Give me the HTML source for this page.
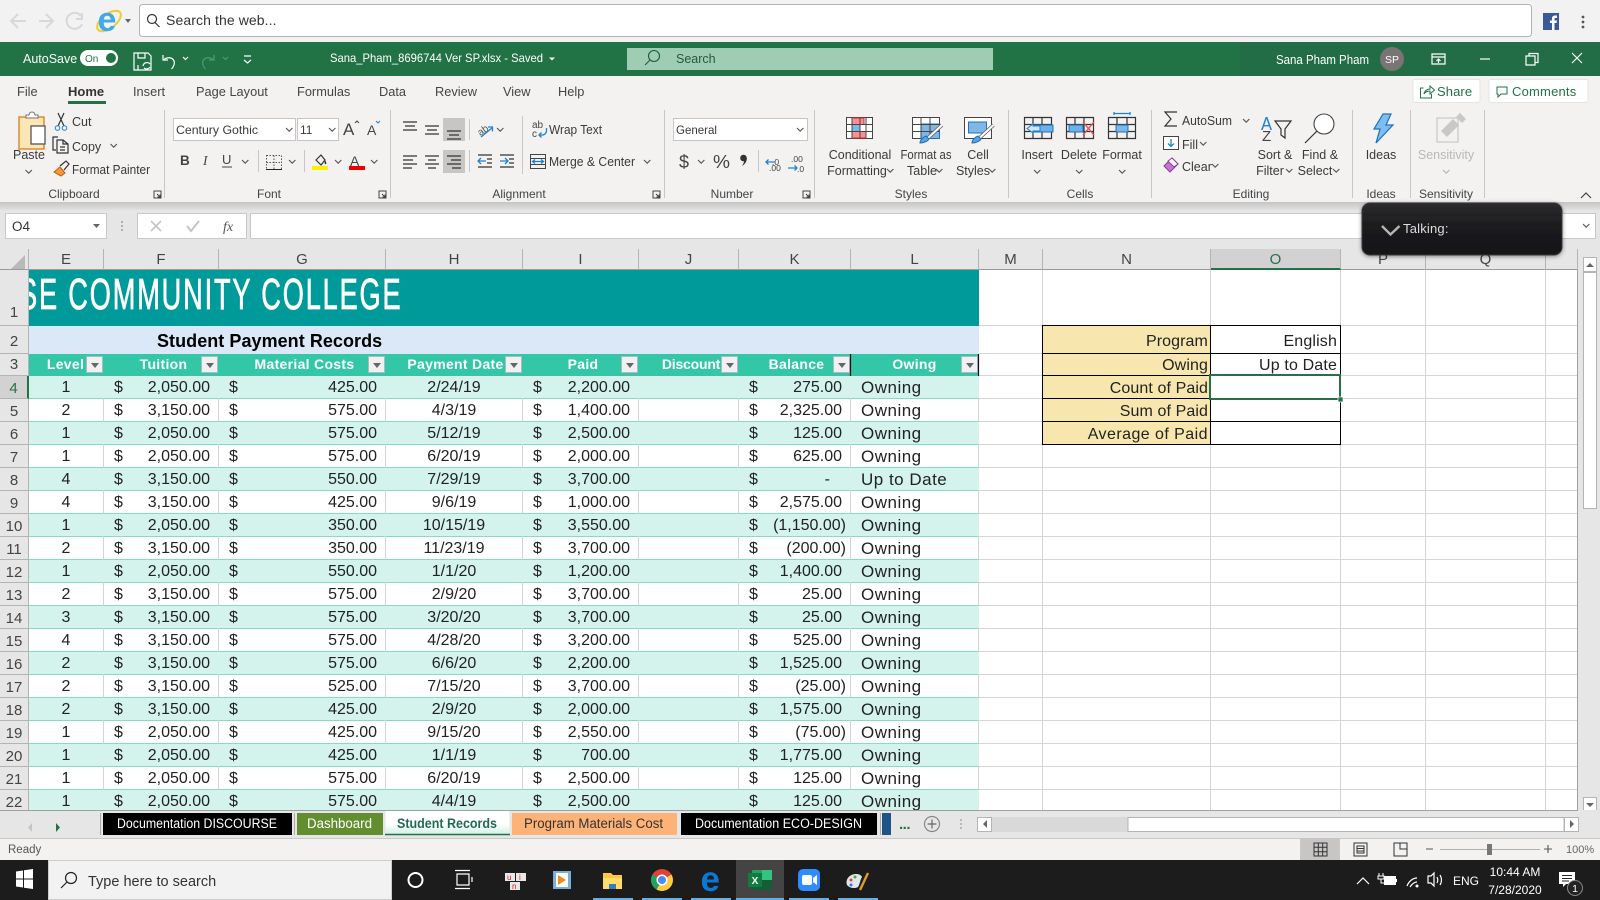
<!DOCTYPE html>
<html lang="en"><head><meta charset="utf-8"><title>Student Records</title>
<style>
html,body{margin:0;padding:0;width:1600px;height:900px;overflow:hidden;background:#e6e6e6;font-family:"Liberation Sans",sans-serif}
#grid{position:absolute;left:0;top:249px;width:1578px;height:561px;overflow:hidden;background:#fff}
table{border-collapse:separate;border-spacing:0;table-layout:fixed;width:1578px;font-size:16px;color:#222}
td,th{padding:0;box-sizing:border-box;position:relative;white-space:nowrap;font-weight:normal}
tr{height:23px}
tr.h{height:21px}
td{border-right:1px solid #d4d4d4;border-bottom:1px solid #d4d4d4;background:#fff}
th{background:#e6e6e6;color:#444;font-size:15px;line-height:17px;padding-top:2px;border-right:1px solid #b4b4b4;border-bottom:1px solid #b4b4b4}
tr.h th{border-bottom:1px solid #9a9a9a;height:21px;padding-top:2px;line-height:16px}
tr.h th.o{background:#d2d2d2;border-bottom:2px solid #217346;color:#217346}
th.r4{background:#d2d2d2;color:#217346;border-right:2px solid #217346}
.b1{background:#009a9a;border:0;overflow:hidden}
.b1 span{position:absolute;left:-10px;top:-3px;color:#fff;font-size:44px;line-height:56px;transform-origin:0 50%;transform:scaleX(.617);letter-spacing:3px;-webkit-text-stroke:.8px #fff}
.b2{background:#dae8f8;border:0;text-align:left;font-weight:bold;font-size:18px;color:#000;padding-left:128px;padding-top:2px;letter-spacing:.05px}
.b3{background:#33c7a8;border:0;color:#fff;font-weight:bold;font-size:14px;line-height:16px;padding-bottom:2px;text-align:center;letter-spacing:.3px;border-bottom:1px solid #33c7a8}
.b3 u{position:absolute;right:1px;top:2px;width:15px;height:15px;background:#f1f1f1;border:1px solid #aeb9c2}
.b3 u:after{content:"";position:absolute;left:3.5px;top:6px;border:4px solid transparent;border-top:5px solid #666;border-bottom:0}
tr.e td.d{background:#d3f3ec;border-right-color:#d3f3ec}
td.d{border-bottom:1px solid #82dcc8;line-height:18px;padding-top:2px}
td.c{text-align:center}
td.n{text-align:right;padding-right:8px}
td.n i{position:absolute;font-style:normal;left:10px;top:3px}
td.k{padding-right:8px}
td.p{padding-right:4px}
td.o{padding-left:10px;font-size:17px;letter-spacing:.5px}
td.lab{background:#f7e6ae;text-align:right;padding-right:2px;border:0;line-height:16px;padding-top:3px;letter-spacing:.1px;border-right:1px solid #000;border-bottom:1px solid #000}
td.val{text-align:right;padding-right:3px;line-height:16px;padding-top:3px;letter-spacing:.15px;border-right:1px solid #000;border-bottom:1px solid #000}
svg{position:absolute;left:0;top:0}
text{font-family:"Liberation Sans",sans-serif}
.t{font-size:12.5px;fill:#3b3a39}
.tc{font-size:12.5px;fill:#3b3a39;text-anchor:middle}
.g{font-size:12px;fill:#444;text-anchor:middle}
.tab{font-size:13.5px;fill:#444}
.w{fill:#fff}
.ln{fill:none;stroke:#444;stroke-width:1}
.gl{fill:none;stroke:#d8d8d8;stroke-width:2}
.dk{fill:none;stroke:#333;stroke-width:1.2}
.bl{fill:none;stroke:#1e82d2;stroke-width:1.3}
.ch{fill:none;stroke:#555;stroke-width:1.1}
.sep{stroke:#c8c6c4;stroke-width:1}
.ww{fill:none;stroke:#fff;stroke-width:1.2}
</style></head><body>
<div id="grid"><table>
<colgroup><col style="width:29px"><col style="width:75px"><col style="width:115px"><col style="width:167px"><col style="width:137px"><col style="width:116px"><col style="width:100px"><col style="width:112px"><col style="width:128px"><col style="width:64px"><col style="width:168px"><col style="width:130px"><col style="width:85px"><col style="width:120px"><col style="width:32px"></colgroup>
<tr class="h"><th></th><th>E</th><th>F</th><th>G</th><th>H</th><th>I</th><th>J</th><th>K</th><th>L</th><th>M</th><th>N</th><th class="o">O</th><th>P</th><th>Q</th><th></th></tr>
<tr style="height:56px"><th style="vertical-align:bottom;padding-bottom:4px;padding-top:0">1</th><td colspan="8" class="b1"><span>SE COMMUNITY COLLEGE</span></td><td></td><td></td><td></td><td></td><td></td><td></td></tr>
<tr style="height:28px"><th style="padding-top:4px">2</th><td colspan="8" class="b2">Student Payment Records</td><td></td><td class="lab" style="padding-top:4px">Program</td><td class="val" style="padding-top:4px">English</td><td></td><td></td><td></td></tr>
<tr style="height:22px"><th style="padding-top:0">3</th><td class="b3" style="padding-right:2px">Level<u></u></td><td class="b3" style="padding-left:4px">Tuition<u></u></td><td class="b3" style="padding-left:4px">Material Costs<u></u></td><td class="b3" style="padding-left:2px">Payment Date<u></u></td><td class="b3" style="padding-left:4px">Paid<u></u></td><td class="b3" style="padding-left:4px;letter-spacing:-.2px">Discount<u></u></td><td class="b3" style="padding-left:3px">Balance<u></u></td><td class="b3" style="padding-right:1px">Owing<u></u></td><td></td><td class="lab" style="padding-top:2px">Owing</td><td class="val" style="padding-top:2px">Up to Date</td><td></td><td></td><td></td></tr>
<tr class="e"><th class="r4">4</th><td class="d c">1</td><td class="d n"><i>$</i>2,050.00</td><td class="d n"><i>$</i>425.00</td><td class="d c">2/24/19</td><td class="d n"><i>$</i>2,200.00</td><td class="d"></td><td class="d n k"><i>$</i>275.00</td><td class="d o">Owning</td><td></td><td class="lab">Count of Paid</td><td class="val"></td><td></td><td></td><td></td></tr>
<tr><th>5</th><td class="d c">2</td><td class="d n"><i>$</i>3,150.00</td><td class="d n"><i>$</i>575.00</td><td class="d c">4/3/19</td><td class="d n"><i>$</i>1,400.00</td><td class="d"></td><td class="d n k"><i>$</i>2,325.00</td><td class="d o">Owning</td><td></td><td class="lab">Sum of Paid</td><td class="val"></td><td></td><td></td><td></td></tr>
<tr class="e"><th>6</th><td class="d c">1</td><td class="d n"><i>$</i>2,050.00</td><td class="d n"><i>$</i>575.00</td><td class="d c">5/12/19</td><td class="d n"><i>$</i>2,500.00</td><td class="d"></td><td class="d n k"><i>$</i>125.00</td><td class="d o">Owning</td><td></td><td class="lab" style="letter-spacing:.45px">Average of Paid</td><td class="val"></td><td></td><td></td><td></td></tr>
<tr><th>7</th><td class="d c">1</td><td class="d n"><i>$</i>2,050.00</td><td class="d n"><i>$</i>575.00</td><td class="d c">6/20/19</td><td class="d n"><i>$</i>2,000.00</td><td class="d"></td><td class="d n k"><i>$</i>625.00</td><td class="d o">Owning</td><td></td><td></td><td></td><td></td><td></td><td></td></tr>
<tr class="e"><th>8</th><td class="d c">4</td><td class="d n"><i>$</i>3,150.00</td><td class="d n"><i>$</i>550.00</td><td class="d c">7/29/19</td><td class="d n"><i>$</i>3,700.00</td><td class="d"></td><td class="d n k" style="padding-right:20px"><i>$</i>-</td><td class="d o">Up to Date</td><td></td><td></td><td></td><td></td><td></td><td></td></tr>
<tr><th>9</th><td class="d c">4</td><td class="d n"><i>$</i>3,150.00</td><td class="d n"><i>$</i>425.00</td><td class="d c">9/6/19</td><td class="d n"><i>$</i>1,000.00</td><td class="d"></td><td class="d n k"><i>$</i>2,575.00</td><td class="d o">Owning</td><td></td><td></td><td></td><td></td><td></td><td></td></tr>
<tr class="e"><th>10</th><td class="d c">1</td><td class="d n"><i>$</i>2,050.00</td><td class="d n"><i>$</i>350.00</td><td class="d c">10/15/19</td><td class="d n"><i>$</i>3,550.00</td><td class="d"></td><td class="d n p"><i>$</i>(1,150.00)</td><td class="d o">Owning</td><td></td><td></td><td></td><td></td><td></td><td></td></tr>
<tr><th>11</th><td class="d c">2</td><td class="d n"><i>$</i>3,150.00</td><td class="d n"><i>$</i>350.00</td><td class="d c">11/23/19</td><td class="d n"><i>$</i>3,700.00</td><td class="d"></td><td class="d n p"><i>$</i>(200.00)</td><td class="d o">Owning</td><td></td><td></td><td></td><td></td><td></td><td></td></tr>
<tr class="e"><th>12</th><td class="d c">1</td><td class="d n"><i>$</i>2,050.00</td><td class="d n"><i>$</i>550.00</td><td class="d c">1/1/20</td><td class="d n"><i>$</i>1,200.00</td><td class="d"></td><td class="d n k"><i>$</i>1,400.00</td><td class="d o">Owning</td><td></td><td></td><td></td><td></td><td></td><td></td></tr>
<tr><th>13</th><td class="d c">2</td><td class="d n"><i>$</i>3,150.00</td><td class="d n"><i>$</i>575.00</td><td class="d c">2/9/20</td><td class="d n"><i>$</i>3,700.00</td><td class="d"></td><td class="d n k"><i>$</i>25.00</td><td class="d o">Owning</td><td></td><td></td><td></td><td></td><td></td><td></td></tr>
<tr class="e"><th>14</th><td class="d c">3</td><td class="d n"><i>$</i>3,150.00</td><td class="d n"><i>$</i>575.00</td><td class="d c">3/20/20</td><td class="d n"><i>$</i>3,700.00</td><td class="d"></td><td class="d n k"><i>$</i>25.00</td><td class="d o">Owning</td><td></td><td></td><td></td><td></td><td></td><td></td></tr>
<tr><th>15</th><td class="d c">4</td><td class="d n"><i>$</i>3,150.00</td><td class="d n"><i>$</i>575.00</td><td class="d c">4/28/20</td><td class="d n"><i>$</i>3,200.00</td><td class="d"></td><td class="d n k"><i>$</i>525.00</td><td class="d o">Owning</td><td></td><td></td><td></td><td></td><td></td><td></td></tr>
<tr class="e"><th>16</th><td class="d c">2</td><td class="d n"><i>$</i>3,150.00</td><td class="d n"><i>$</i>575.00</td><td class="d c">6/6/20</td><td class="d n"><i>$</i>2,200.00</td><td class="d"></td><td class="d n k"><i>$</i>1,525.00</td><td class="d o">Owning</td><td></td><td></td><td></td><td></td><td></td><td></td></tr>
<tr><th>17</th><td class="d c">2</td><td class="d n"><i>$</i>3,150.00</td><td class="d n"><i>$</i>525.00</td><td class="d c">7/15/20</td><td class="d n"><i>$</i>3,700.00</td><td class="d"></td><td class="d n p"><i>$</i>(25.00)</td><td class="d o">Owning</td><td></td><td></td><td></td><td></td><td></td><td></td></tr>
<tr class="e"><th>18</th><td class="d c">2</td><td class="d n"><i>$</i>3,150.00</td><td class="d n"><i>$</i>425.00</td><td class="d c">2/9/20</td><td class="d n"><i>$</i>2,000.00</td><td class="d"></td><td class="d n k"><i>$</i>1,575.00</td><td class="d o">Owning</td><td></td><td></td><td></td><td></td><td></td><td></td></tr>
<tr><th>19</th><td class="d c">1</td><td class="d n"><i>$</i>2,050.00</td><td class="d n"><i>$</i>425.00</td><td class="d c">9/15/20</td><td class="d n"><i>$</i>2,550.00</td><td class="d"></td><td class="d n p"><i>$</i>(75.00)</td><td class="d o">Owning</td><td></td><td></td><td></td><td></td><td></td><td></td></tr>
<tr class="e"><th>20</th><td class="d c">1</td><td class="d n"><i>$</i>2,050.00</td><td class="d n"><i>$</i>425.00</td><td class="d c">1/1/19</td><td class="d n"><i>$</i>700.00</td><td class="d"></td><td class="d n k"><i>$</i>1,775.00</td><td class="d o">Owning</td><td></td><td></td><td></td><td></td><td></td><td></td></tr>
<tr><th>21</th><td class="d c">1</td><td class="d n"><i>$</i>2,050.00</td><td class="d n"><i>$</i>575.00</td><td class="d c">6/20/19</td><td class="d n"><i>$</i>2,500.00</td><td class="d"></td><td class="d n k"><i>$</i>125.00</td><td class="d o">Owning</td><td></td><td></td><td></td><td></td><td></td><td></td></tr>
<tr class="e"><th>22</th><td class="d c">1</td><td class="d n"><i>$</i>2,050.00</td><td class="d n"><i>$</i>575.00</td><td class="d c">4/4/19</td><td class="d n"><i>$</i>2,500.00</td><td class="d"></td><td class="d n k"><i>$</i>125.00</td><td class="d o">Owning</td><td></td><td></td><td></td><td></td><td></td><td></td></tr>
</table></div>

<svg width="1600" height="900" viewBox="0 0 1600 900" xmlns="http://www.w3.org/2000/svg">
<defs>
<path id="ch" class="ch" d="M0 0l3.2 3.2 3.2-3.2"/>
<linearGradient id="sh" x1="0" y1="0" x2="0" y2="1"><stop offset="0" stop-color="#c4c4c4"/><stop offset="1" stop-color="#e6e6e6"/></linearGradient>
<linearGradient id="pop" x1="0" y1="0" x2="0" y2="1"><stop offset="0" stop-color="#2b2b2d"/><stop offset=".5" stop-color="#1a1a1c"/><stop offset="1" stop-color="#161618"/></linearGradient>
<linearGradient id="sr" x1="0" y1="0" x2="0" y2="1"><stop offset="0" stop-color="#fff"/><stop offset=".55" stop-color="#fff"/><stop offset="1" stop-color="#cfeee6"/></linearGradient>
<filter id="ds" x="-10%" y="-20%" width="120%" height="140%"><feDropShadow dx="0" dy="1" stdDeviation="2" flood-opacity=".45"/></filter>
</defs>

<!-- browser bar -->
<rect width="1600" height="42" fill="#f2f2f2"/>
<path class="gl" d="M26 21H12M18 14l-7 7 7 7M39 21h14M46 14l7 7-7 7"/>
<path class="gl" d="M81 16a8 8 0 1 0 1 8M82 13v6h-6" />
<ellipse cx="109" cy="21" rx="14" ry="7" fill="none" stroke="#f5c92f" stroke-width="2" transform="rotate(-38 109 21)"/>
<text x="97.500" y="31" font-size="34" font-weight="bold" fill="#41a9ea">e</text>
<path d="M125 19h6l-3 4z" fill="#666"/>
<rect x="139.500" y="4.500" width="1392" height="32" rx="3" fill="#fff" stroke="#b4b4b4"/>
<circle cx="152" cy="19" r="4.500" class="dk" fill="none"/><path class="dk" d="M155 22.500l4.500 4.500"/>
<text x="166" y="25" font-size="14" fill="#333" letter-spacing=".1">Search the web...</text>
<rect x="1543" y="13" width="16" height="17" fill="#3b5998"/><path d="M1552 30v-7h-2v-2.500h2v-2c0-2 1.200-3 3-3h2v2.500h-1.500c-.8 0-1 .4-1 1.100v1.400h2.500l-.4 2.500h-2.100v7z" fill="#fff"/>
<circle cx="1583" cy="17" r="1.400" fill="#555"/><circle cx="1583" cy="22" r="1.400" fill="#555"/><circle cx="1583" cy="27" r="1.400" fill="#555"/>

<!-- title bar -->
<rect y="42" width="1600" height="34" fill="#217346"/>
<rect x="1240" y="42" width="360" height="34" fill="#236b46" opacity=".7"/>
<text x="23" y="63" font-size="12.500" class="w">AutoSave</text>
<rect x="80" y="50" width="38" height="16" rx="8" fill="#fff"/><text x="85" y="62" font-size="10" fill="#217346">On</text><circle cx="111" cy="58" r="5" fill="#217346"/>
<path class="ww" d="M134 53h14l3 3v14h-17zM138 53v5h7v-5M138 70v-5"/><path class="ww" d="M143 66a4 4 0 0 1 7-2M150 67a4 4 0 0 1-6 1"/>
<path class="ww" d="M163 55v5h5M163.500 60c3-3 8-3 10 0s0 7-2 9" stroke-width="1.400"/>
<path class="ww" d="M183 57l2.500 2.500 2.500-2.500"/>
<path d="M214 55v5h-5M213.500 60c-3-3-8-3-10 0s0 7 2 9M223 57l2.500 2.500 2.500-2.500" fill="none" stroke="#4d9a72" stroke-width="1.200"/>
<path class="ww" d="M244 56h7M244 60l3.500 3 3.500-3"/>
<text x="330" y="62" font-size="12" class="w" textLength="213" lengthAdjust="spacingAndGlyphs">Sana_Pham_8696744 Ver SP.xlsx - Saved</text>
<path d="M549 57.500h6l-3 3z" fill="#fff"/>
<rect x="627" y="48" width="366" height="22" fill="#9fcdb3"/>
<circle cx="654" cy="56" r="5.500" fill="none" stroke="#1c5a3a" stroke-width="1.100"/><path d="M650 60l-5 5" stroke="#1c5a3a" stroke-width="1.100"/>
<text x="676" y="63" font-size="12.500" fill="#1f5c3c">Search</text>
<text x="1276" y="64" font-size="12.500" class="w" textLength="93" lengthAdjust="spacingAndGlyphs">Sana Pham Pham</text>
<circle cx="1392" cy="59" r="12" fill="#7a7574"/><text x="1392" y="63" font-size="10.500" class="w" text-anchor="middle">SP</text>
<path class="ww" d="M1432 54h13v10h-13zM1432 57h13M1438.500 63v-4M1436.500 61l2-2 2 2"/>
<path class="ww" d="M1480 59h10"/>
<path class="ww" d="M1526 56h9v9h-9zM1529 56v-2.500h9v9h-3"/>
<path class="ww" d="M1572 53l10 10M1582 53l-10 10"/>

<!-- ribbon -->
<rect y="76" width="1600" height="126" fill="#f3f2f1"/>
<g font-size="12.800" fill="#444">
<text x="17" y="96">File</text><text x="68" y="96" font-weight="bold" fill="#333" font-size="13">Home</text><text x="133" y="96">Insert</text><text x="196" y="96">Page Layout</text><text x="297" y="96">Formulas</text><text x="379" y="96">Data</text><text x="435" y="96">Review</text><text x="503" y="96">View</text><text x="558" y="96">Help</text>
</g>
<rect x="68" y="101" width="38" height="3" fill="#217346"/>
<rect x="1413" y="79.500" width="67" height="23" rx="2" fill="#fff" stroke="#e4e4e4"/>
<path d="M1423.500 88h-3v10h11v-4M1424 94c.5-3 3-5 6-5v-3l4.500 4-4.500 4v-3c-2 0-4.500.5-6 3z" fill="none" stroke="#217346" stroke-width="1"/>
<text x="1437" y="96" font-size="13" fill="#217346" letter-spacing=".1">Share</text>
<rect x="1489" y="79.500" width="99" height="23" rx="2" fill="#fff" stroke="#e4e4e4"/>
<path d="M1497 87h10v7h-6l-3 3v-3h-1z" fill="none" stroke="#217346"/>
<text x="1512" y="96" font-size="13" fill="#217346" letter-spacing=".2">Comments</text>

<g class="sep"><path d="M164.500 110v88M390.500 110v88M664.500 110v88M814.500 110v88M1008.500 110v88M1151.500 110v88M1352.500 110v88M1410.500 110v88M1484.500 110v88M522.500 116v58M469.500 119v21M469.500 150v22M258.500 150v22M304.500 150v22M758.500 150v22" stroke="#c8c6c4" fill="none"/></g>

<!-- clipboard -->
<path d="M19 117h25v32H19z" fill="#fce6b5" stroke="#d87c14" stroke-width="1.300"/><path d="M26 118v-3h3a3 3 0 0 1 6 0h3v3z" fill="#fff" stroke="#777"/>
<rect x="31" y="126" width="14" height="18" fill="#fff" stroke="#555" stroke-width="1.300"/>
<text x="29" y="159" class="tc">Paste</text><use href="#ch" x="25.500" y="170"/>
<path class="dk" d="M58 113l6 13M64 113l-6 13"/><circle cx="57.500" cy="128" r="2.300" fill="none" stroke="#1e82d2"/><circle cx="64.500" cy="128" r="2.300" fill="none" stroke="#1e82d2"/>
<text x="72" y="126" class="t">Cut</text>
<path class="dk" d="M58 137h-5v13h3M57 140h6l5 4v9H57zM63 140v4h5M60 147h5M60 150h5"/>
<text x="72" y="151" class="t">Copy</text><use href="#ch" x="110.500" y="144"/>
<path d="M54 172l6-5 5 6-4 3z" fill="#f29a38" stroke="#c55a11"/><path class="dk" d="M60 166l6-5 3 3-5 6"/>
<text x="72" y="174" class="t" textLength="78" lengthAdjust="spacingAndGlyphs">Format Painter</text>
<text x="74" y="198" class="g">Clipboard</text>
<path d="M154 191h7v7h-7zM157 194l3 3M160 194.500v2.500h-2.500" class="ln" stroke-width=".8"/>

<!-- font -->
<rect x="173.500" y="118.500" width="122" height="22" fill="#fff" stroke="#c8c6c4"/><text x="176" y="134" class="t" style="font-size:12px" fill="#222" textLength="82" lengthAdjust="spacingAndGlyphs">Century Gothic</text><use href="#ch" x="286" y="128"/>
<rect x="297.500" y="118.500" width="41" height="22" fill="#fff" stroke="#c8c6c4"/><text x="300" y="134" class="t" style="font-size:12px" fill="#222">11</text><use href="#ch" x="329" y="128"/>
<text x="343" y="135" font-size="17" fill="#444">A</text><path class="ln" d="M355 123l2-2 2 2"/>
<text x="367" y="135" font-size="14" fill="#444">A</text><path d="M376 121l2 2 2-2" fill="none" stroke="#1e82d2"/>
<text x="180" y="165" font-size="13.500" font-weight="bold" fill="#444">B</text>
<text x="203" y="165" font-size="13.500" font-style="italic" style="font-family:'Liberation Serif'" fill="#444">I</text>
<text x="222" y="164" font-size="13" fill="#444">U</text><path class="ln" d="M222 167h10"/><use href="#ch" x="242" y="160"/>
<path d="M266.500 155.500h15v14h-15zM274 155.500v14M266.500 162.500h15" fill="none" stroke="#555" stroke-dasharray="1.500 1.500"/><path d="M266 169.500h16" stroke="#222"/><use href="#ch" x="289" y="160"/>
<path class="dk" d="M316 160l5-5 4 5-4 5z"/><path d="M325 160c1 2 2 3 1 4s-2-1-1-4z" fill="#333"/><rect x="312" y="166" width="16" height="4" fill="#ffef00"/><use href="#ch" x="335" y="160"/>
<text x="350" y="166" font-size="14" fill="#444">A</text><rect x="349" y="166" width="16" height="4" fill="#ee0000"/><use href="#ch" x="371" y="160"/>
<text x="269" y="198" class="g">Font</text>
<path d="M379 191h7v7h-7zM382 194l3 3M385 194.500v2.500h-2.500" class="ln" stroke-width=".8"/>

<!-- alignment -->
<rect x="443" y="118" width="22" height="23" fill="#c8c6c4"/><rect x="443" y="150" width="22" height="23" fill="#c8c6c4"/>
<path class="dk" d="M403 122h14M405 126h10M403 130h14M425 126h14M427 130h10M425 134h14M447 131h14M449 135h10M447 139h14"/>
<path class="dk" d="M403 156h14M403 160h10M403 164h14M403 168h9M425 156h14M428 160h8M425 164h14M428 168h8M447 156h14M451 160h10M447 164h14M452 168h9"/>
<text x="477" y="134" font-size="10" fill="#555" transform="rotate(-35 482 130)">ab</text><path class="bl" d="M481 137l11-9M488 127h4.500v4.500"/><use href="#ch" x="497" y="128"/>
<path class="dk" d="M478 155h14M487 159h5M487 163h5M478 167h14M500 155h14M509 159h5M509 163h5M500 167h14"/>
<path class="bl" d="M486 161h-8M481 158l-3 3 3 3M500 161h8M505 158l3 3-3 3" stroke-width="1.200"/>
<text x="532" y="128" font-size="10" fill="#444">ab</text><text x="532" y="137" font-size="10" fill="#444">c</text><path class="bl" d="M546.500 128v3c0 2-2 4-4 4h-3M541.500 132.500l-2.500 2.500 2.500 2.500"/>
<text x="549" y="134" class="t" textLength="53" lengthAdjust="spacingAndGlyphs">Wrap Text</text>
<path d="M530.500 154.500h15v14h-15z" fill="none" stroke="#444"/><path class="ln" d="M530.500 158.500h15M530.500 164.500h15"/><path class="bl" d="M533 161.500h10M535 159.500l-2.500 2 2.500 2M541 159.500l2.500 2-2.500 2" stroke-width="1"/>
<text x="549" y="166" class="t" textLength="86" lengthAdjust="spacingAndGlyphs">Merge &amp; Center</text><use href="#ch" x="644" y="160"/>
<text x="519" y="198" class="g">Alignment</text>
<path d="M653 191h7v7h-7zM656 194l3 3M659 194.500v2.500h-2.500" class="ln" stroke-width=".8"/>

<!-- number -->
<rect x="673.500" y="118.500" width="134" height="22" fill="#fff" stroke="#c8c6c4"/><text x="676" y="134" class="t" style="font-size:12px" fill="#222" textLength="41" lengthAdjust="spacingAndGlyphs">General</text><use href="#ch" x="797" y="128"/>
<text x="679" y="168" font-size="18" fill="#444">$</text><use href="#ch" x="698" y="160"/>
<text x="713" y="168" font-size="18" fill="#444" textLength="17" lengthAdjust="spacingAndGlyphs">%</text>
<circle cx="743.500" cy="158" r="3.300" fill="#333"/><path d="M746.800 158c.2 3-1.500 6-4.800 8 1.500-2 2.200-4 2-6z" fill="#333"/>
<text x="772" y="165" font-size="8.500" fill="#444">.0</text><text x="769" y="171" font-size="8.500" fill="#444">.00</text><path class="bl" d="M775 162h-9M768.500 159.500l-2.500 2.500 2.500 2.500"/>
<text x="791" y="162" font-size="8.500" fill="#444">.00</text><text x="797" y="172" font-size="8.500" fill="#444">.0</text><path class="bl" d="M788 168h9M794.500 165.500l2.500 2.500-2.500 2.500"/>
<text x="732" y="198" class="g">Number</text>
<path d="M803 191h7v7h-7zM806 194l3 3M809 194.500v2.500h-2.500" class="ln" stroke-width=".8"/>

<!-- styles -->
<g><rect x="846.500" y="117.500" width="26" height="21" fill="#fff" stroke="#444"/><rect x="852" y="118" width="12" height="6.500" fill="#fb8f96" stroke="#d32d2d"/><rect x="852" y="125" width="8" height="6.500" fill="#7fb7e6" /><rect x="852" y="131.500" width="14" height="6.500" fill="#fb8f96" stroke="#d32d2d"/><path class="ln" d="M852 118v20M860 118v20M866 118v20M846.500 124.500h26M846.500 131.500h26"/></g>
<text x="860" y="159" class="tc">Conditional</text><text x="857" y="175" class="tc">Formatting</text><use href="#ch" x="887" y="169"/>
<g><rect x="912.500" y="117.500" width="27" height="21" fill="#fff" stroke="#444"/><rect x="921" y="124" width="18.500" height="14.500" fill="#7fb7e6" stroke="#1e72bc"/><path class="ln" d="M921 118v20M930 118v20M912.500 124.500h27M912.500 131.500h27"/><path d="M942 125l-14 13" stroke="#666" stroke-width="3.600"/><path d="M942 125l-14 13" stroke="#fff" stroke-width="2"/><path d="M920 143c0-3 3-6 6-7l3 3c-1 2-5 4-9 4z" fill="#5ca2dc" stroke="#1e72bc"/></g>
<text x="926" y="159" class="tc" textLength="51" lengthAdjust="spacingAndGlyphs">Format as</text><text x="922" y="175" class="tc">Table</text><use href="#ch" x="936" y="169"/>
<g><rect x="964.500" y="117.500" width="27" height="21" fill="#fff" stroke="#444"/><rect x="968.500" y="122" width="18" height="11" fill="#7fb7e6" stroke="#1e72bc"/><path d="M993.500 125l-14 13" stroke="#666" stroke-width="3.600"/><path d="M993.500 125l-14 13" stroke="#fff" stroke-width="2"/><path d="M972 143c0-3 3-6 6-7l3 3c-1 2-5 4-9 4z" fill="#5ca2dc" stroke="#1e72bc"/></g>
<text x="978" y="159" class="tc">Cell</text><text x="973" y="175" class="tc">Styles</text><use href="#ch" x="989" y="169"/>
<text x="911" y="198" class="g">Styles</text>

<!-- cells -->
<g><path class="dk" d="M1024.500 117.500h27v21h-27zM1033 118v20M1042 118v20M1024.500 124.500h27M1024.500 131.500h27"/><rect x="1034" y="125" width="19" height="7" fill="#6fb0e6" stroke="#1e72bc"/><path d="M1033 124l-6 4.500 6 4.500v-2h7v-5h-7z" fill="#cfe6f8" stroke="#1e82d2"/></g>
<text x="1037" y="159" class="tc">Insert</text><use href="#ch" x="1034" y="170"/>
<g><path class="dk" d="M1066.500 117.500h27v21h-27zM1075 118v20M1084 118v20M1066.500 124.500h27M1066.500 131.500h27"/><rect x="1069" y="125" width="14" height="7" fill="#6fb0e6" stroke="#1e72bc"/><path d="M1083 122l11 13M1094 122l-11 13" stroke="#e8484c" stroke-width="1.300"/></g>
<text x="1079" y="159" class="tc">Delete</text><use href="#ch" x="1076" y="170"/>
<g><path class="dk" d="M1108.500 117.500h27v21h-27zM1117 118v20M1127 118v20M1108.500 124.500h27M1108.500 131.500h27"/><rect x="1116" y="125" width="12" height="7" fill="#7fb7e6" stroke="#1e72bc"/><path class="bl" d="M1114 113.500h16M1114 112v3M1130 112v3"/></g>
<text x="1122" y="159" class="tc">Format</text><use href="#ch" x="1119" y="170"/>
<text x="1080" y="198" class="g">Cells</text>

<!-- editing -->
<path class="dk" d="M1177 112h-12l6 7-6 7h12"/>
<text x="1182" y="125" class="t" textLength="50" lengthAdjust="spacingAndGlyphs">AutoSum</text><use href="#ch" x="1243" y="119"/>
<rect x="1163.500" y="136.500" width="15" height="13" fill="#fff" stroke="#444"/><path class="bl" d="M1171 139v7M1168 143.500l3 3 3-3"/>
<text x="1182" y="149" class="t">Fill</text><use href="#ch" x="1200" y="142"/>
<path d="M1164 166l8-8 6 6-8 8z" fill="#c476cf" stroke="#8f3aa0"/><path d="M1172 158l6 6-4 3-6-6z" fill="#fff" stroke="#8f3aa0"/>
<text x="1182" y="171" class="t">Clear</text><use href="#ch" x="1212" y="164"/>
<text x="1261" y="130" font-size="18" fill="#1e82d2" textLength="11" lengthAdjust="spacingAndGlyphs">A</text><text x="1262" y="141" font-size="15" fill="#444">Z</text>
<path class="dk" d="M1275 121h16l-6 8v9l-4-3v-6z"/>
<text x="1275" y="159" class="tc">Sort &amp;</text><text x="1270" y="175" class="tc">Filter</text><use href="#ch" x="1286" y="169"/>
<circle cx="1324" cy="124" r="10" fill="#fff" stroke="#444" stroke-width="1.100"/><path class="dk" d="M1317 131l-12 12"/>
<text x="1320" y="159" class="tc">Find &amp;</text><text x="1315" y="175" class="tc">Select</text><use href="#ch" x="1333" y="169"/>
<text x="1251" y="198" class="g">Editing</text>

<!-- ideas / sensitivity -->
<path d="M1383 114h8l-5 11h7l-17 18 4-14h-6z" fill="#7fbcf0" stroke="#1e72bc" stroke-width="1.200"/>
<text x="1381" y="159" class="tc">Ideas</text><text x="1381" y="198" class="g">Ideas</text>
<path d="M1437 118h16l5 0v24h-21z" fill="#f3f2f1" stroke="#c8c8c8" stroke-width="1.200"/>
<path d="M1441 131l12-12 6 6-12 12z" fill="#c8c8c8"/><path d="M1456 117l4-4 6 6-4 4z" fill="#c8c8c8"/>
<text x="1446" y="159" class="tc" style="fill:#b8b8b8">Sensitivity</text><use href="#ch" x="1443" y="170" style="opacity:.4"/>
<text x="1446" y="198" class="g">Sensitivity</text>
<path d="M1581 198l5-5 5 5" fill="none" stroke="#444" stroke-width="1.200"/>

<!-- formula bar -->
<rect y="202" width="1600" height="47" fill="#e6e6e6"/><rect y="202" width="1600" height="9" fill="url(#sh)"/>
<rect x="5.500" y="213.500" width="101" height="25" fill="#fff" stroke="#c8c8c8"/><text x="12" y="231" font-size="13.500" fill="#333">O4</text><path d="M93 224h7l-3.500 4z" fill="#666"/>
<circle cx="122" cy="222" r=".9" fill="#888"/><circle cx="122" cy="226" r=".9" fill="#888"/><circle cx="122" cy="230" r=".9" fill="#888"/>
<rect x="137.500" y="213.500" width="109" height="25" fill="#fff" stroke="#c8c8c8"/>
<path d="M151 221l10 10M161 221l-10 10" stroke="#c4c4c4" stroke-width="1.600"/><path d="M187 226l4 5 8-10" stroke="#c4c4c4" stroke-width="2" fill="none"/>
<text x="223" y="231" font-size="14" font-style="italic" style="font-family:'Liberation Serif'" fill="#555">fx</text>
<rect x="250.500" y="213.500" width="1345" height="25" fill="#fff" stroke="#c8c8c8"/><use href="#ch" x="1583" y="224" style="stroke-width:1.500"/>

<!-- corner triangle, table overlays -->
<path d="M25 255v14H11z" fill="#b9b9b9"/>
<path d="M978.500 354v22M850.500 354v22" stroke="#111" stroke-width="1.200" fill="none"/>
<path d="M1042.500 325.500h298v119h-298zM1210.500 325.500v119" fill="none" stroke="#000"/>
<rect x="1210" y="375" width="130" height="24" fill="none" stroke="#217346" stroke-width="2"/><rect x="1338" y="397" width="5" height="5" fill="#217346" stroke="#fff" stroke-width=".7"/>

<!-- v scrollbar -->
<rect x="1578" y="249" width="22" height="561" fill="#e6e6e6"/>
<path d="M1577.500 270v540" stroke="#a0a0a0"/>
<rect x="1583.500" y="257.500" width="13" height="14" fill="#fff" stroke="#b4b4b4"/><path d="M1586 267l4-4 4 4z" fill="#666"/>
<rect x="1583.500" y="272.500" width="13" height="236" fill="#fff" stroke="#b4b4b4"/>
<rect x="1583.500" y="797.500" width="13" height="14" fill="#fff" stroke="#b4b4b4"/><path d="M1586 803h8l-4 4z" fill="#666"/>

<!-- sheet tabs -->
<rect y="810" width="1600" height="28" fill="#e6e6e6"/><rect y="810" width="1578" height="1" fill="#a0a0a0"/>
<path d="M32 823v9l-4-4.500z" fill="#c4c4c4"/><path d="M56 823v9l4-4.500z" fill="#217346"/>
<path d="M100.500 813v22M294.500 813v22M880.500 813v22" stroke="#aaa" stroke-width="1"/>
<rect x="103" y="813" width="189" height="22" fill="#000"/><text x="117" y="828" class="tab" style="fill:#fff" textLength="160" lengthAdjust="spacingAndGlyphs">Documentation DISCOURSE</text>
<rect x="297" y="813" width="86" height="22" fill="#638e30"/><text x="307" y="828" class="tab" style="fill:#fff" textLength="65" lengthAdjust="spacingAndGlyphs">Dashboard</text>
<path d="M385.500 811v24h124v-24" fill="url(#sr)"/><path d="M385 834.500h125" stroke="#217346" stroke-width="1.500"/>
<text x="397" y="828" class="tab" font-weight="bold" style="fill:#1d6b50" textLength="100" lengthAdjust="spacingAndGlyphs">Student Records</text>
<rect x="512" y="813" width="165" height="22" fill="#fdb278"/><text x="524" y="828" class="tab" style="fill:#333" textLength="139" lengthAdjust="spacingAndGlyphs">Program Materials Cost</text>
<rect x="681" y="813" width="196" height="22" fill="#000"/><text x="695" y="828" class="tab" style="fill:#fff" textLength="167" lengthAdjust="spacingAndGlyphs">Documentation ECO-DESIGN</text>
<rect x="882" y="813" width="9" height="22" fill="#1f5586"/>
<text x="899" y="829" font-size="15" font-weight="bold" fill="#217346" letter-spacing="-.5">...</text>
<circle cx="932" cy="824" r="7.500" fill="none" stroke="#888" stroke-width="1.200"/><path d="M927.500 824h9M932 819.500v9" stroke="#666" stroke-width="1.200"/>
<circle cx="961" cy="820" r=".9" fill="#999"/><circle cx="961" cy="824" r=".9" fill="#999"/><circle cx="961" cy="828" r=".9" fill="#999"/>
<rect x="977.500" y="817.500" width="14" height="14" fill="#fff" stroke="#b4b4b4"/><path d="M987 820v8l-4-4z" fill="#666"/>
<rect x="992" y="817" width="136" height="15" fill="#d9d9d9"/>
<rect x="1128" y="817.500" width="436" height="14" fill="#fff" stroke="#b4b4b4"/>
<rect x="1564.500" y="817.500" width="14" height="14" fill="#fff" stroke="#b4b4b4"/><path d="M1570 820v8l4-4z" fill="#666"/>

<!-- status -->
<rect y="838" width="1600" height="22" fill="#f3f2f1"/><rect y="838" width="1600" height="1" fill="#c8c8c8"/>
<text x="8" y="853" font-size="11.500" fill="#555">Ready</text>
<rect x="1300" y="839" width="40" height="21" fill="#c8c6c4"/>
<path d="M1314 843h13v13h-13zM1318.300 843v13M1322.700 843v13M1314 847.300h13M1314 851.700h13" fill="none" stroke="#333" stroke-width="1"/>
<path d="M1354 843h13v13h-13zM1357 846h7v7h-7zM1357 848.500h7M1357 851h7" fill="none" stroke="#333" stroke-width="1"/>
<path d="M1394 843h13v13h-13zM1400 843v6h7" fill="none" stroke="#333" stroke-width="1"/>
<path d="M1426 849h7M1544 849h8M1548 845v8" stroke="#555" stroke-width="1.100"/><path d="M1440 849.500h100" stroke="#b0b0b0"/><rect x="1487" y="844" width="5" height="11" fill="#777"/>
<text x="1566" y="853" font-size="11" fill="#666">100%</text>

<!-- taskbar -->
<rect y="860" width="1600" height="40" fill="#1c1c1c"/>
<path d="M16 871.500l7-1v8h-7zM24 870.300l9-1.300v9.500h-9zM16 879.500h7v8l-7-1zM24 879.500h9v9.500l-9-1.300z" fill="#fff"/>
<rect x="48.500" y="860.500" width="343" height="39" fill="#f2f2f2" stroke="#ccc"/>
<circle cx="71" cy="878" r="5.500" fill="none" stroke="#222" stroke-width="1.200"/><path d="M67 882l-6 6" stroke="#222" stroke-width="1.200"/>
<text x="88" y="886" font-size="14.500" fill="#333">Type here to search</text>
<circle cx="415.500" cy="880" r="7" fill="none" stroke="#fff" stroke-width="2"/>
<path class="ww" d="M457 874h12v11h-12zM455 870.500h15M455 888.500h15M472 877v5" />
<g><rect x="505" y="873" width="10" height="8" fill="#e8e8e8"/><rect x="516" y="873" width="10" height="8" fill="#e8e8e8"/><rect x="510" y="882" width="10" height="8" fill="#e8e8e8"/><text x="507" y="880" font-size="8" fill="#d02020">u</text><text x="519" y="880" font-size="8" fill="#d02020">i</text><text x="512" y="889" font-size="8" fill="#d02020">n</text></g>
<rect x="553" y="871" width="18" height="18" fill="#7aaed8"/><rect x="556" y="873" width="12" height="14" fill="#fff"/><path d="M558 875l8 5-8 5z" fill="#f08a1d"/>
<path d="M603 873h8l2 2h9v14h-19z" fill="#ffc93c"/><rect x="603" y="878" width="19" height="11" fill="#ffdc6b"/><rect x="609" y="884" width="7" height="5" fill="#2f7fc6"/>
<circle cx="662" cy="880" r="11" fill="#dd4437"/><path d="M662 880l9.500-5.500A11 11 0 0 1 656.500 889.500z" fill="#ffcd40"/><path d="M662 880L656.500 889.500A11 11 0 0 1 652.500 874.500z" fill="#1da462"/><circle cx="662" cy="880" r="4.800" fill="#4c8bf5" stroke="#fff" stroke-width="1.500"/>
<text x="700.500" y="891" font-size="35" font-weight="bold" fill="#0a78d4">e</text>
<rect x="736" y="860" width="48" height="40" fill="#444"/>
<rect x="752" y="870" width="20" height="20" rx="1" fill="#21a366"/><rect x="752" y="880" width="20" height="10" fill="#185c37"/><rect x="762" y="870" width="10" height="10" fill="#33c481"/>
<rect x="748" y="873" width="14" height="14" fill="#107c41"/><text x="755" y="884" font-size="10" font-weight="bold" fill="#fff" text-anchor="middle">X</text>
<rect x="798" y="869" width="22" height="22" rx="5" fill="#2d8cff"/><rect x="802" y="875" width="10" height="10" rx="2" fill="#fff"/><path d="M813 878l4-3v10l-4-3z" fill="#fff"/>
<path d="M847 885c-2-6 3-11 9-11 3 0 5 1 6 3-2 3-2 7-4 10-3 2-9 1-11-2z" fill="#dfe6ee"/><circle cx="851" cy="880" r="1.500" fill="#e04040"/><circle cx="855" cy="877" r="1.500" fill="#40b040"/><circle cx="851" cy="885" r="1.500" fill="#4070e0"/><path d="M860 890l8-17" stroke="#e39a2c" stroke-width="2.400"/>
<g fill="#64aee8"><rect x="593" y="898" width="40" height="2"/><rect x="642" y="898" width="40" height="2"/><rect x="691" y="898" width="40" height="2"/><rect x="736" y="898" width="48" height="2"/><rect x="789" y="898" width="40" height="2"/><rect x="838" y="898" width="40" height="2"/></g>
<path class="ww" d="M1357 884l6-6 6 6" stroke-width="1.400"/>
<rect x="1384.500" y="876.500" width="11" height="8" fill="#fff" stroke="#fff"/><path d="M1396.500 879v3" stroke="#fff"/><path d="M1379 873v3M1383 873v3M1378 876h6v3h-6zM1381 879v4h3" fill="none" stroke="#fff"/>
<path d="M1407 886c2-5 6-8 10-8M1410 887c2-3 4-5 7-5" class="ww"/><circle cx="1417" cy="886" r="1.500" fill="#fff"/>
<path class="ww" d="M1428 876h3l3-3v13l-3-3h-3zM1437 877c1 2 1 4 0 6M1440 875c2 3 2 7 0 10"/>
<text x="1453" y="885" font-size="12" class="w">ENG</text>
<text x="1515" y="876" font-size="12" class="w" text-anchor="middle">10:44 AM</text><text x="1515" y="894" font-size="12" class="w" text-anchor="middle">7/28/2020</text>
<path d="M1559 872h16v12h-9l-3 3v-3h-4z" fill="#fff"/><path d="M1562 875.500h10M1562 878.500h10M1562 881h7" stroke="#222"/>
<circle cx="1575" cy="888" r="7.500" fill="#222" stroke="#888"/><text x="1575" y="892" font-size="10.500" class="w" text-anchor="middle">1</text>

<!-- talking popup -->
<rect x="1362" y="203" width="200" height="52" rx="8" fill="url(#pop)" stroke="#3a3a3c" filter="url(#ds)"/>
<path d="M1382 226l8.500 8.500 9-8.500" fill="none" stroke="#b5b5b5" stroke-width="2.400"/>
<text x="1403" y="233" font-size="13" fill="#ddd" letter-spacing=".2">Talking:</text>
</svg>
</body></html>
